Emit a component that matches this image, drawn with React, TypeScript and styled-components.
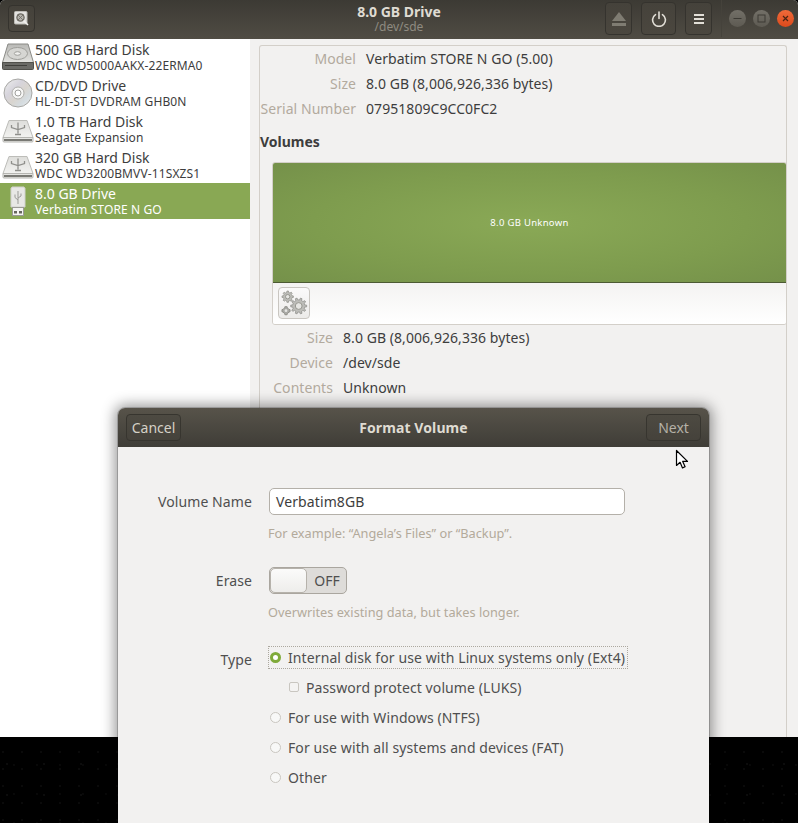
import React from "react";
import styled, { createGlobalStyle } from "styled-components";

const Global = createGlobalStyle`
  html, body { margin: 0; padding: 0; background: #000; }
  body { font-family: "Noto Sans", "Open Sans", sans-serif; }
`;

const Screen = styled.div`
  position: relative;
  width: 798px;
  height: 823px;
  overflow: hidden;
  background-color: #000;
  background-image:
    radial-gradient(circle at 3px 4px, #111 0.5px, transparent 1px),
    radial-gradient(circle at 14px 11px, #0e0e0e 0.5px, transparent 1px),
    radial-gradient(circle at 7px 20px, #141414 0.5px, transparent 1px);
  background-size: 19px 17px, 23px 29px, 37px 31px;
`;

const Window = styled.div`
  height: 737px;
  display: flex;
  flex-direction: column;
  background: #f2f1f0;
  border-radius: 5px 5px 0 0;
  overflow: hidden;
`;

const HeaderBar = styled.header`
  height: 39px;
  flex: none;
  display: grid;
  grid-template-columns: 1fr auto 1fr;
  align-items: center;
  padding: 0 4px 2px;
  background: linear-gradient(#3c3a34, #504c44);
  box-sizing: border-box;
`;

const HeaderLeft = styled.div`
  padding-left: 4px;
`;

const Titles = styled.div`
  text-align: center;
  line-height: 15px;
`;

const Title = styled.div`
  font-size: 14px;
  font-weight: 700;
  color: #dfdbd2;
`;

const Subtitle = styled.div`
  font-size: 12px;
  color: #8f8b81;
`;

const HeaderRight = styled.div`
  justify-self: end;
  display: flex;
  align-items: center;
  gap: 9px;
`;

const HeadButton = styled.button<{ $w: number; $h?: number }>`
  width: ${(p) => p.$w}px;
  height: ${(p) => p.$h ?? 33}px;
  padding: 0;
  display: flex;
  align-items: center;
  justify-content: center;
  border: 1px solid #35332e;
  border-radius: 4px;
  background: linear-gradient(#45423b, #4b473f);
`;

const WinButtons = styled.div`
  display: flex;
  align-items: center;
  gap: 7px;
  height: 37px;
  padding-left: 7px;
  border-left: 1px solid #45423b;
`;

const WinButton = styled.div<{ $close?: boolean }>`
  width: 17px;
  height: 17px;
  border-radius: 50%;
  background: ${(p) =>
    p.$close ? "linear-gradient(#f06a3a, #dc4a1c)" : "linear-gradient(#737068, #5d5a52)"};
  display: flex;
  align-items: center;
  justify-content: center;
`;

const Body = styled.div`
  flex: 1;
  display: flex;
  min-height: 0;
`;

const Sidebar = styled.aside`
  width: 250px;
  flex: none;
  background: #fff;
`;

const DriveRow = styled.div<{ $active?: boolean }>`
  height: 36px;
  display: flex;
  align-items: center;
  background: ${(p) => (p.$active ? "#89a854" : "transparent")};
  color: ${(p) => (p.$active ? "#fff" : "#3d3d3d")};
`;

const DriveIcon = styled.div`
  width: 35px;
  flex: none;
  display: flex;
  justify-content: center;
`;

const DriveText = styled.div`
  min-width: 0;
  white-space: nowrap;
`;

const DriveName = styled.div`
  font-size: 14px;
  line-height: 17px;
`;

const DriveModel = styled.div`
  font-size: 12px;
  line-height: 15px;
  letter-spacing: 0.12px;
`;

const Content = styled.main`
  flex: 1;
  padding: 6px 11px 0 9px;
`;

const Frame = styled.section`
  height: 100%;
  box-sizing: border-box;
  border: 1px solid #d3cfc9;
  border-bottom: none;
  border-radius: 3px 3px 0 0;
`;

const InfoRow = styled.div<{ $label: number }>`
  display: grid;
  grid-template-columns: ${(p) => p.$label}px 1fr;
  column-gap: 10px;
  height: 25px;
  align-items: center;
  font-size: 14px;
  letter-spacing: 0.06px;
`;

const InfoLabel = styled.div`
  text-align: right;
  color: #b2aa9e;
  white-space: nowrap;
`;

const InfoValue = styled.div`
  color: #3d3d3d;
`;

const SectionTitle = styled.div`
  font-size: 14px;
  font-weight: 700;
  color: #3d3d3d;
  margin: 11px 0 10px;
  line-height: 20px;
`;

const VolumeGroup = styled.div`
  margin-left: 12px;
  margin-right: -1px;
`;

const VolumeCard = styled.div`
  border: 1px solid #d3cfc9;
  border-radius: 3px;
  overflow: hidden;
`;

const VolumeBar = styled.div`
  height: 119px;
  display: flex;
  align-items: center;
  justify-content: center;
  font-size: 9.5px;
  letter-spacing: 0.3px;
  color: #fff;
  background: radial-gradient(ellipse at center, #8aa956 0%, #7e9c4e 60%, #75914a 100%);
  border-bottom: 1px solid #4c5a33;
`;

const VolumeTools = styled.div`
  height: 41px;
  box-sizing: border-box;
  padding: 4px 5px;
  background: linear-gradient(#f4f3f2, #fff);
`;

const GearButton = styled.button`
  width: 32px;
  height: 32px;
  padding: 0;
  display: flex;
  align-items: center;
  justify-content: center;
  border: 1px solid #c9c6c1;
  border-radius: 4px;
  background: linear-gradient(#fbfafa, #ecebe9);
`;

const Dialog = styled.div`
  position: absolute;
  left: 118px;
  top: 408px;
  width: 591px;
  height: 440px;
  border-radius: 7px 7px 0 0;
  background: #f2f1f0;
  box-shadow: 0 0 14px 3px rgba(0, 0, 0, 0.42);
  outline: 1px solid rgba(0, 0, 0, 0.18);
`;

const DialogHeader = styled.div`
  height: 39px;
  box-sizing: border-box;
  padding: 6px 8px 0 8px;
  display: flex;
  align-items: flex-start;
  justify-content: space-between;
  border-radius: 7px 7px 0 0;
  background: linear-gradient(#57534a, #3f3d37);
`;

const DialogTitle = styled.div`
  font-size: 14px;
  font-weight: 700;
  line-height: 27px;
  letter-spacing: 0.1px;
  color: #dfdbd2;
`;

const DialogButton = styled.button<{ $dim?: boolean }>`
  width: 55px;
  height: 27px;
  padding: 0;
  font: 14px "Noto Sans", sans-serif;
  color: ${(p) => (p.$dim ? "#b5b1a7" : "#d5d1c7")};
  border: 1px solid #37352f;
  border-radius: 4px;
  background: linear-gradient(#4d4a42, #45423b);
`;

const Form = styled.div`
  display: grid;
  grid-template-columns: 134px 1fr;
  column-gap: 17px;
  padding: 41px 0 0 0;
  font-size: 14px;
  letter-spacing: 0.1px;
`;

const FieldLabel = styled.div`
  text-align: right;
  color: #4f4f4f;
  line-height: 27px;
`;

const FieldBody = styled.div<{ $gap?: number }>`
  margin-bottom: ${(p) => p.$gap ?? 0}px;
`;

const TextBox = styled.div`
  width: 356px;
  height: 27px;
  box-sizing: border-box;
  padding: 0 6px;
  line-height: 25px;
  color: #3d3d3d;
  background: #fff;
  border: 1px solid #b4b0a9;
  border-radius: 5px;
`;

const Hint = styled.div`
  margin: 10px 0 0 -1px;
  font-size: 12.75px;
  line-height: 16px;
  letter-spacing: 0;
  color: #b3aa9b;
`;

const Switch = styled.div`
  position: relative;
  width: 78px;
  height: 27px;
  box-sizing: border-box;
  border: 1px solid #aaa69f;
  border-radius: 5px;
  background: #dedcd9;
  color: #4f4f4f;
  line-height: 25px;
  text-align: right;
  padding-right: 6px;
`;

const Knob = styled.div`
  position: absolute;
  left: 0;
  top: 0;
  width: 37px;
  height: 25px;
  box-sizing: border-box;
  border: 1px solid #b6b2ab;
  border-radius: 5px;
  background: linear-gradient(#fbfbfa, #eeedeb);
`;

const Options = styled.div`
  display: flex;
  flex-direction: column;
`;

const Option = styled.div<{ $focus?: boolean; $indent?: boolean }>`
  height: ${(p) => (p.$focus ? 23 : 22)}px;
  width: max-content;
  box-sizing: border-box;
  display: flex;
  align-items: center;
  gap: 7px;
  margin-bottom: ${(p) => (p.$focus ? 7 : 8)}px;
  margin-left: ${(p) => (p.$focus ? -1 : p.$indent ? 20 : 1)}px;
  padding: 0 ${(p) => (p.$focus ? 2 : 0)}px 0 ${(p) => (p.$focus ? 1 : 0)}px;
  color: #4f4f4f;
  white-space: nowrap;
  border: ${(p) => (p.$focus ? "1px dotted #aca89f" : "none")};
`;

const Radio = styled.span<{ $on?: boolean }>`
  width: 11px;
  height: 11px;
  box-sizing: border-box;
  flex: none;
  border-radius: 50%;
  border: ${(p) => (p.$on ? "3px solid #7faa3a" : "1px solid #c9c6c0")};
  background: ${(p) => (p.$on ? "#fff" : "#f8f8f7")};
`;

const Check = styled.span`
  width: 10px;
  height: 10px;
  box-sizing: border-box;
  flex: none;
  border-radius: 2px;
  border: 1px solid #c9c6c0;
  background: #f4f3f2;
`;

const Cursor = styled.svg`
  position: absolute;
  left: 675px;
  top: 449px;
`;

const gearPath = (cx: number, cy: number, r: number, teeth: number) => {
  const pts: string[] = [];
  const inner = r * 0.76;
  for (let i = 0; i < teeth; i++) {
    const a = (i / teeth) * Math.PI * 2;
    const s = (Math.PI * 2) / teeth;
    [
      [inner, a - s * 0.5],
      [inner, a - s * 0.27],
      [r, a - s * 0.17],
      [r, a + s * 0.17],
      [inner, a + s * 0.27],
    ].forEach(([d, t]) => {
      pts.push(`${(cx + d * Math.cos(t)).toFixed(2)} ${(cy + d * Math.sin(t)).toFixed(2)}`);
    });
  }
  return `M${pts.join("L")}Z`;
};

const HardDisk = () => (
  <svg width="32" height="32" viewBox="0 0 32 32">
    <defs>
      <linearGradient id="hd" x1="0" y1="0" x2="0" y2="1">
        <stop offset="0" stopColor="#b9b9b6" />
        <stop offset="1" stopColor="#e2e2df" />
      </linearGradient>
    </defs>
    <path d="M6 3h20l5.5 18.5H.5z" fill="url(#hd)" stroke="#8a8a86" strokeLinejoin="round" />
    <path d="M.5 21.5h31v6a1 1 0 0 1-1 1h-29a1 1 0 0 1-1-1z" fill="#6a6a66" stroke="#50504b" />
    <path d="M3 24.5h22" stroke="#3f3f3b" />
    <ellipse cx="15.5" cy="12.5" rx="10" ry="6" fill="#d6d6d3" stroke="#9e9e9a" />
    <ellipse cx="15.5" cy="12.5" rx="3.2" ry="1.8" fill="#f0f0ee" stroke="#9e9e9a" />
  </svg>
);

const Disc = () => (
  <svg width="32" height="32" viewBox="0 0 32 32">
    <defs>
      <linearGradient id="dg" x1="0" y1="0" x2="1" y2="1">
        <stop offset="0" stopColor="#f0f0ee" />
        <stop offset="0.35" stopColor="#d6d4dc" />
        <stop offset="0.55" stopColor="#d9d5cf" />
        <stop offset="0.75" stopColor="#d5dce0" />
        <stop offset="1" stopColor="#efefed" />
      </linearGradient>
    </defs>
    <circle cx="16" cy="16" r="14" fill="url(#dg)" stroke="#a8a8a5" />
    <circle cx="16" cy="16" r="6" fill="#f6f6f5" stroke="#b0b0ad" />
    <circle cx="16" cy="16" r="3" fill="#fff" stroke="#a0a09d" />
  </svg>
);

const UsbDisk = () => (
  <svg width="32" height="32" viewBox="0 0 32 32">
    <defs>
      <linearGradient id="ud" x1="0" y1="0" x2="0" y2="1">
        <stop offset="0" stopColor="#dededb" />
        <stop offset="1" stopColor="#f2f2f0" />
      </linearGradient>
    </defs>
    <path d="M7 7.5h18l6 17H1z" fill="url(#ud)" stroke="#bdbdb9" strokeLinejoin="round" />
    <path d="M1 24.5h30v3.5a1 1 0 0 1-1 1H2a1 1 0 0 1-1-1z" fill="#e5e5e2" stroke="#b5b5b1" />
    <path d="M2 27h28" stroke="#55554f" strokeWidth="1.6" />
    <path d="M16 9.5v11M13 21.5h6M9.5 12v2.5l6.5 2 6.5-2V12" fill="none" stroke="#8f8f8b" strokeWidth="1.3" />
  </svg>
);

const UsbStick = () => (
  <svg width="32" height="32" viewBox="0 0 32 32">
    <path d="M10 2h12l1 1.5V22H9V3.5z" fill="#e8e8e5" stroke="#d0d0cc" />
    <path d="M16 6v13M13 9.5v3l3 2.5M19 8.5v2.5l-3 2" fill="none" stroke="#9b9b97" strokeWidth="1" />
    <rect x="10.5" y="22.5" width="11" height="8" fill="#f4f4f2" stroke="#9a9a95" />
    <rect x="12" y="26" width="3" height="2.5" fill="#66665f" />
    <rect x="17" y="26" width="3" height="2.5" fill="#66665f" />
  </svg>
);

const AppIcon = () => (
  <svg width="15" height="15" viewBox="0 0 15 15">
    <rect x="0.5" y="0.5" width="12.5" height="12.5" rx="1" fill="#e4e3e0" stroke="#bdbbb5" />
    <circle cx="6.5" cy="6.5" r="3.6" fill="#b5b3ad" stroke="#6e6b63" strokeWidth="1.3" />
    <path d="M3.5 3.5l6 6M9.5 3.5l-6 6" stroke="#6e6b63" strokeWidth="0.8" />
    <path d="M9.5 9.5L14 14" stroke="#f1f0ee" strokeWidth="1.6" />
  </svg>
);

const Gears = () => (
  <svg width="30" height="30" viewBox="0 0 30 30">
    <path d={gearPath(19.7, 18, 8, 10)} fill="#bdbdb9" stroke="#8f8f8b" strokeWidth="0.8" />
    <circle cx="19.7" cy="18" r="3.4" fill="#e6e6e3" stroke="#96968f" />
    <path d={gearPath(8.7, 8.7, 5.7, 8)} fill="#bdbdb9" stroke="#96968f" strokeWidth="0.8" />
    <circle cx="8.7" cy="8.7" r="2.2" fill="#e6e6e3" stroke="#96968f" />
    <path d={gearPath(7, 22.7, 4.2, 4)} fill="#a9a9a5" stroke="#85857f" strokeWidth="0.8" />
    <circle cx="7" cy="22.7" r="1.4" fill="#e6e6e3" />
  </svg>
);

const drives = [
  { name: "500 GB Hard Disk", model: "WDC WD5000AAKX-22ERMA0", icon: <HardDisk /> },
  { name: "CD/DVD Drive", model: "HL-DT-ST DVDRAM GHB0N", icon: <Disc /> },
  { name: "1.0 TB Hard Disk", model: "Seagate Expansion", icon: <UsbDisk /> },
  { name: "320 GB Hard Disk", model: "WDC WD3200BMVV-11SXZS1", icon: <UsbDisk /> },
  { name: "8.0 GB Drive", model: "Verbatim STORE N GO", icon: <UsbStick />, active: true },
];

export default function App() {
  return (
    <Screen>
      <Global />
      <Window>
        <HeaderBar>
          <HeaderLeft>
            <HeadButton $w={27} $h={27}>
              <AppIcon />
            </HeadButton>
          </HeaderLeft>
          <Titles>
            <Title>8.0 GB Drive</Title>
            <Subtitle>/dev/sde</Subtitle>
          </Titles>
          <HeaderRight>
            <HeadButton $w={27}>
              <svg width="16" height="16" viewBox="0 0 16 16">
                <path d="M8 1l7 9H1z" fill="#7f7c72" />
                <rect x="1" y="12" width="14" height="3" fill="#7f7c72" />
              </svg>
            </HeadButton>
            <HeadButton $w={35}>
              <svg width="16" height="16" viewBox="0 0 16 16" fill="none" stroke="#e2dfd7" strokeWidth="1.6" strokeLinecap="round">
                <path d="M4.5 3.6a6.4 6.4 0 1 0 7 0" />
                <path d="M8 1v6.5" />
              </svg>
            </HeadButton>
            <HeadButton $w={27}>
              <svg width="10" height="10" viewBox="0 0 10 10">
                <path d="M0 0h10v2H0zM0 4h10v2H0zM0 8h10v2H0z" fill="#e2dfd7" />
              </svg>
            </HeadButton>
            <WinButtons>
              <WinButton>
                <svg width="9" height="9" viewBox="0 0 9 9"><path d="M0.5 4.5h8" stroke="#3c3a34" /></svg>
              </WinButton>
              <WinButton>
                <svg width="9" height="9" viewBox="0 0 9 9"><rect x="1" y="1" width="7" height="7" fill="none" stroke="#3c3a34" /></svg>
              </WinButton>
              <WinButton $close>
                <svg width="9" height="9" viewBox="0 0 9 9"><path d="M2 2l5 5M7 2l-5 5" stroke="#4a2413" strokeWidth="1.2" /></svg>
              </WinButton>
            </WinButtons>
          </HeaderRight>
        </HeaderBar>
        <Body>
          <Sidebar>
            {drives.map((d) => (
              <DriveRow key={d.name} $active={d.active}>
                <DriveIcon>{d.icon}</DriveIcon>
                <DriveText>
                  <DriveName>{d.name}</DriveName>
                  <DriveModel>{d.model}</DriveModel>
                </DriveText>
              </DriveRow>
            ))}
          </Sidebar>
          <Content>
            <Frame>
              <InfoRow $label={96}><InfoLabel>Model</InfoLabel><InfoValue>Verbatim STORE N GO (5.00)</InfoValue></InfoRow>
              <InfoRow $label={96}><InfoLabel>Size</InfoLabel><InfoValue>8.0 GB (8,006,926,336 bytes)</InfoValue></InfoRow>
              <InfoRow $label={96}><InfoLabel>Serial Number</InfoLabel><InfoValue>07951809C9CC0FC2</InfoValue></InfoRow>
              <SectionTitle>Volumes</SectionTitle>
              <VolumeGroup>
                <VolumeCard>
                  <VolumeBar>8.0 GB Unknown</VolumeBar>
                  <VolumeTools>
                    <GearButton><Gears /></GearButton>
                  </VolumeTools>
                </VolumeCard>
                <InfoRow $label={61}><InfoLabel>Size</InfoLabel><InfoValue>8.0 GB (8,006,926,336 bytes)</InfoValue></InfoRow>
                <InfoRow $label={61}><InfoLabel>Device</InfoLabel><InfoValue>/dev/sde</InfoValue></InfoRow>
                <InfoRow $label={61}><InfoLabel>Contents</InfoLabel><InfoValue>Unknown</InfoValue></InfoRow>
              </VolumeGroup>
            </Frame>
          </Content>
        </Body>
      </Window>
      <Dialog>
        <DialogHeader>
          <DialogButton>Cancel</DialogButton>
          <DialogTitle>Format Volume</DialogTitle>
          <DialogButton $dim>Next</DialogButton>
        </DialogHeader>
        <Form>
          <FieldLabel>Volume Name</FieldLabel>
          <FieldBody $gap={26}>
            <TextBox>Verbatim8GB</TextBox>
            <Hint>For example: “Angela’s Files” or “Backup”.</Hint>
          </FieldBody>
          <FieldLabel>Erase</FieldLabel>
          <FieldBody $gap={26}>
            <Switch><Knob />OFF</Switch>
            <Hint>Overwrites existing data, but takes longer.</Hint>
          </FieldBody>
          <FieldLabel>Type</FieldLabel>
          <Options>
            <Option $focus><Radio $on />Internal disk for use with Linux systems only (Ext4)</Option>
            <Option $indent><Check />Password protect volume (LUKS)</Option>
            <Option><Radio />For use with Windows (NTFS)</Option>
            <Option><Radio />For use with all systems and devices (FAT)</Option>
            <Option><Radio />Other</Option>
          </Options>
        </Form>
      </Dialog>
      <Cursor width="14" height="22" viewBox="0 0 14 22">
        <path d="M1.5 1.5v15l3.6-3.2 2.4 5.6 2.6-1.1-2.4-5.4h4.8z" fill="#fff" stroke="#000" strokeWidth="1.2" strokeLinejoin="round" />
      </Cursor>
    </Screen>
  );
}
